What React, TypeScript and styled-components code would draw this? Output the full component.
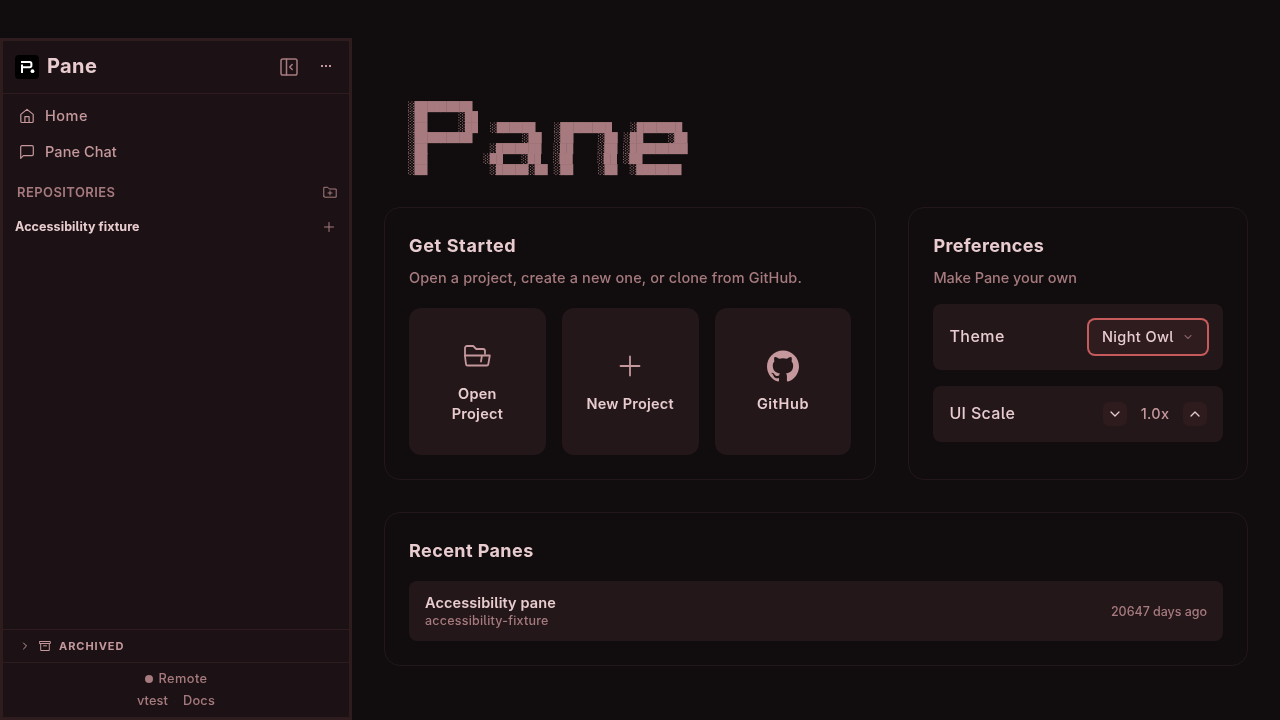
import React from "react";
import styled, { createGlobalStyle } from "styled-components";

const c = {
  bg: "#110d0e",
  side: "#1c1215",
  border: "#2f1c1f",
  faint: "#231719",
  tile: "#231719",
  raised: "#2f1c1f",
  text: "#e8cccf",
  second: "#c4989c",
  muted: "#a67a7e",
  accent: "#c75b5b",
};

const Global = createGlobalStyle`
  * { box-sizing: border-box; }
  body { margin: 0; background: ${c.bg}; overflow: hidden; }
  button { font: inherit; color: inherit; border: 0; padding: 0; background: none; }
  svg { display: block; flex: none; }
`;

const Shell = styled.div`
  height: 720px;
  display: flex;
  will-change: transform;
  color: ${c.text};
  font-family: Inter, "Liberation Sans", sans-serif;
  font-weight: 450;
  font-feature-settings: "cv05";
`;

const Label = styled.span<{ $ls?: number }>`
  white-space: nowrap;
  letter-spacing: ${(p) => p.$ls ?? 0}px;
`;

const Sidebar = styled.aside`
  width: 352px;
  margin-top: 38px;
  flex: none;
  display: flex;
  flex-direction: column;
  background: ${c.side};
  border: 3px solid ${c.border};
`;

const SideHeader = styled.header`
  height: 53px;
  display: flex;
  align-items: center;
  padding: 0 17px 0 12px;
  border-bottom: 1px solid ${c.border};
`;

const Brand = styled.h1`
  margin: 0 auto 0 8px;
  font-size: 20px;
  line-height: 28px;
  font-weight: 750;
  padding-bottom: 2px;
`;

const IconButton = styled.button<{ $color?: string; $gap?: number }>`
  display: flex;
  margin-left: ${(p) => p.$gap ?? 0}px;
  color: ${(p) => p.$color ?? c.muted};
`;

const Nav = styled.nav`
  display: flex;
  flex-direction: column;
  padding: 4px 16px 0;
`;

const NavItem = styled.a`
  height: 36px;
  display: flex;
  align-items: center;
  gap: 10px;
  font-size: 14.5px;
  line-height: 20px;
  color: ${c.second};
`;

const SectionHead = styled.div`
  display: flex;
  align-items: center;
  justify-content: space-between;
  height: 36px;
  margin-top: 4px;
  padding: 0 12px 0 14px;
  font-size: 13px;
  font-weight: 600;
  color: ${c.muted};
`;

const Repo = styled.div`
  display: flex;
  align-items: center;
  justify-content: space-between;
  height: 34px;
  padding: 0 14px 0 12px;
  font-size: 12.5px;
  font-weight: 650;

  span { padding-bottom: 1px; }
`;

const Archived = styled.div`
  height: 34px;
  margin-top: auto;
  display: flex;
  align-items: center;
  padding-left: 16px;
  border: solid ${c.border};
  border-width: 1px 0;
  color: ${c.second};
  font-size: 11px;
  font-weight: 700;
`;

const ArchiveIcon = styled.span`
  margin: 0 8px 0 8px;
`;

const Footer = styled.footer`
  height: 54px;
  display: flex;
  flex-direction: column;
  align-items: center;
  padding-top: 5px;
  font-size: 12.8px;
  line-height: 22px;
  color: ${c.muted};
`;

const FooterRow = styled.div<{ $gap: number }>`
  display: flex;
  align-items: center;
  gap: ${(p) => p.$gap}px;
`;

const Dot = styled.i<{ $size: number; $dim?: boolean }>`
  width: ${(p) => p.$size}px;
  height: ${(p) => p.$size}px;
  border-radius: 50%;
  background: ${(p) => (p.$dim ? c.border : c.muted)};
`;

const Main = styled.main`
  flex: 1;
  padding: 102px 32px 0;
`;

const Banner = styled.pre`
  margin: 0 0 0 24px;
  height: 105px;
  font-family: "DejaVu Sans Mono", monospace;
  font-size: 11px;
  line-height: 12.4px;
  font-weight: 400;
  letter-spacing: -0.2px;
  word-spacing: -0.18px;
  transform: scaleY(0.85);
  transform-origin: 0 0;
  color: ${c.muted};
`;

const Columns = styled.div`
  display: grid;
  grid-template-columns: 492.4px 339.6px;
  gap: 32px;
  margin-bottom: 32px;
`;

const Card = styled.section<{ $h: number }>`
  height: ${(p) => p.$h}px;
  padding: 24px;
  border: 1px solid ${c.faint};
  border-radius: 16px;
`;

const Title = styled.h2`
  margin: 0;
  font-size: 18px;
  line-height: 28px;
  font-weight: 700;
`;

const Sub = styled.p<{ $gap: number }>`
  margin: 8px 0 ${(p) => p.$gap}px;
  font-size: 14.5px;
  line-height: 20px;
  color: ${c.muted};
`;

const Tiles = styled.div`
  display: grid;
  grid-template-columns: repeat(3, 1fr);
  gap: 16px;
`;

const Tile = styled.button`
  height: 147px;
  display: flex;
  flex-direction: column;
  align-items: center;
  justify-content: center;
  gap: 12px;
  border-radius: 12px;
  background: ${c.tile};
  font-size: 14.5px;
  line-height: 20px;
  font-weight: 600;
  text-align: center;

  svg { color: ${c.second}; }
`;

const Setting = styled.div<{ $h: number }>`
  height: ${(p) => p.$h}px;
  margin-bottom: 16px;
  padding: 0 16px;
  display: flex;
  align-items: center;
  justify-content: space-between;
  border-radius: 8px;
  background: ${c.tile};
  font-size: 16px;

  > span { padding-bottom: 2px; }
`;

const Select = styled.button`
  width: 118px;
  height: 34px;
  padding: 0 13px;
  display: flex;
  align-items: center;
  justify-content: space-between;
  border-radius: 6px;
  background: ${c.raised};
  box-shadow: 0 0 0 2px ${c.accent};
  font-size: 14.5px;
  line-height: 20px;
  font-weight: 500;

  span { padding-bottom: 1px; }
  svg { color: ${c.muted}; opacity: 0.7; }
`;

const Stepper = styled.div`
  width: 104px;
  display: flex;
  align-items: center;
  justify-content: space-between;
  font-size: 14.5px;
  line-height: 20px;
  color: ${c.second};
`;

const Step = styled.button`
  width: 24px;
  height: 24px;
  display: grid;
  place-items: center;
  border-radius: 6px;
  background: #2d1b1e;
  color: ${c.text};
`;

const Recent = styled.div`
  height: 60px;
  margin-top: 16px;
  padding: 0 16px;
  display: flex;
  align-items: center;
  justify-content: space-between;
  border-radius: 8px;
  background: ${c.tile};
  font-size: 12.5px;
  color: ${c.muted};
`;

const RecentText = styled.div`
  display: flex;
  flex-direction: column;
  line-height: 16px;
`;

const RecentName = styled.strong`
  font-size: 14.5px;
  line-height: 20px;
  font-weight: 600;
  color: ${c.text};
`;

type IconProps = { w: number; h?: number; vb: string; sw?: number; children: React.ReactNode };
const Icon = ({ w, h = w, vb, sw = 1.2, children }: IconProps) => (
  <svg width={w} height={h} viewBox={vb} fill="none" stroke="currentColor" strokeWidth={sw} strokeLinecap="round" strokeLinejoin="round">
    {children}
  </svg>
);

const banner = [
  "░█████████",
  "░██     ░██",
  "░██     ░██  ░██████   ░████████   ░███████",
  "░█████████        ░██  ░██    ░██ ░██    ░██",
  "░██          ░███████  ░██    ░██ ░█████████",
  "░██         ░██   ░██  ░██    ░██ ░██",
  "░██          ░█████░██ ░██    ░██  ░███████",
].join("\n");

export default function App() {
  return (
    <Shell>
      <Global />
      <Sidebar>
        <SideHeader>
          <svg width="24" height="24" viewBox="0 0 24 24">
            <rect width="24" height="24" rx="4" fill="#000" />
            <path d="M7 18V9.500M6 7H14.700Q16.400 7 16.400 8.800V10.500Q16.400 12.300 14.700 12.300H7" fill="none" stroke="#fff" strokeWidth="2" />
            <circle cx="17.500" cy="16.200" r="1.900" fill="#fff" />
          </svg>
          <Brand><Label $ls={0.4}>Pane</Label></Brand>
          <IconButton>
            <Icon w={18} vb="0 0 18 18" sw={1.5}>
              <rect x="1" y="1" width="16" height="16" rx="1.8" />
              <path d="M6.5 1v16M12.2 6.5 9.7 9l2.5 2.5" />
            </Icon>
          </IconButton>
          <IconButton $color={c.second} $gap={21}>
            <svg width="13" height="14" viewBox="0 0 13 14" fill="currentColor">
              <path d="M2 5h2v2H2zM6 5h2v2H6zM10 5h2v2h-2z" />
            </svg>
          </IconButton>
        </SideHeader>
        <Nav>
          <NavItem>
            <Icon w={16} vb="0 0 16 16" sw={1.2}>
              <path d="M1.8 6.4 8 1.4l6.2 5v6.8a1.3 1.3 0 0 1-1.3 1.3H3.100a1.3 1.3 0 0 1-1.300-1.300zM5.900 14.400V8.600h4.200v5.800" />
            </Icon>
            <Label $ls={0.5}>Home</Label>
          </NavItem>
          <NavItem>
            <Icon w={16} vb="0 0 16 16" sw={1.2}>
              <path d="M1.700 14.300V3a1.300 1.300 0 0 1 1.300-1.300h10a1.300 1.300 0 0 1 1.300 1.300v7.300a1.300 1.300 0 0 1-1.300 1.300H4.400z" />
            </Icon>
            <Label $ls={0.08}>Pane Chat</Label>
          </NavItem>
        </Nav>
        <SectionHead>
          <Label $ls={0.42}>REPOSITORIES</Label>
          <Icon w={14} vb="0 0 14 14" sw={1}>
            <path d="M.8 11.200V2.300h4l1.500 1.700h6.900v8.200H1.800a1 1 0 0 1-1-1zM7 6v4M5 8h4" />
          </Icon>
        </SectionHead>
        <Repo>
          <Label $ls={0.08}>Accessibility fixture</Label>
          <IconButton><Icon w={12} vb="0 0 12 12" sw={1}><path d="M6 1.500v9M1.500 6h9" /></Icon></IconButton>
        </Repo>
        <Archived>
          <Icon w={12} vb="0 0 12 12" sw={1}><path d="m4.500 3 3 3-3 3" /></Icon>
          <ArchiveIcon>
            <Icon w={12} vb="0 0 12 12" sw={1}><path d="M.7 1.500h10.600v2H.7zM1.700 3.500v7h8.600v-7M4.500 5.800h3" /></Icon>
          </ArchiveIcon>
          <Label $ls={0.95}>ARCHIVED</Label>
        </Archived>
        <Footer>
          <FooterRow $gap={6}><Dot $size={8} /><Label $ls={0.4}>Remote</Label></FooterRow>
          <FooterRow $gap={7}><Label $ls={0.1}>vtest</Label><Dot $size={1} $dim /><Label $ls={0.2}>Docs</Label></FooterRow>
        </Footer>
      </Sidebar>
      <Main>
        <Banner>{banner}</Banner>
        <Columns>
          <Card $h={273}>
            <Title><Label $ls={0.65}>Get Started</Label></Title>
            <Sub $gap={20}><Label $ls={0.13}>Open a project, create a new one, or clone from GitHub.</Label></Sub>
            <Tiles>
              <Tile>
                <Icon w={32} vb="0 0 32 32" sw={1.800}>
                  <path d="M4 15V8a2 2 0 0 1 2-2h6.200l3 3h6.800a2 2 0 0 1 2 2V13.500M3.800 15.500h25l-1.500 8.600a1.600 1.600 0 0 1-1.600 1.400H6.600a1.600 1.600 0 0 1-1.600-1.400L3.900 15.500M20.800 16.500l-.8 5" />
                </Icon>
                <Label $ls={0.25}>Open<br />Project</Label>
              </Tile>
              <Tile>
                <Icon w={32} vb="0 0 32 32" sw={1.800}><path d="M16 6.500v19M6.500 16h19" /></Icon>
                <Label $ls={0.25}>New Project</Label>
              </Tile>
              <Tile>
                <svg width="32" height="32" viewBox="0 0 24 24" fill="currentColor">
                  <path d="M12 .297c-6.630 0-12 5.373-12 12 0 5.303 3.438 9.800 8.205 11.385.6.113.820-.258.820-.577 0-.285-.010-1.040-.015-2.040-3.338.724-4.042-1.610-4.042-1.610C4.422 18.070 3.633 17.700 3.633 17.700c-1.087-.744.084-.729.084-.729 1.205.084 1.838 1.236 1.838 1.236 1.070 1.835 2.809 1.305 3.495.998.108-.776.417-1.305.760-1.605-2.665-.300-5.466-1.332-5.466-5.930 0-1.310.465-2.380 1.235-3.220-.135-.303-.540-1.523.105-3.176 0 0 1.005-.322 3.300 1.230.960-.267 1.980-.399 3-.405 1.020.006 2.040.138 3 .405 2.280-1.552 3.285-1.230 3.285-1.230.645 1.653.240 2.873.120 3.176.765.840 1.230 1.910 1.230 3.220 0 4.610-2.805 5.625-5.475 5.920.420.360.810 1.096.810 2.220 0 1.606-.015 2.896-.015 3.286 0 .315.210.690.825.570C20.565 22.092 24 17.592 24 12.297c0-6.627-5.373-12-12-12" />
                </svg>
                <Label $ls={0.6}>GitHub</Label>
              </Tile>
            </Tiles>
          </Card>
          <Card $h={273}>
            <Title><Label $ls={0.35}>Preferences</Label></Title>
            <Sub $gap={16}><Label $ls={-0.06}>Make Pane your own</Label></Sub>
            <Setting $h={66}>
              <Label $ls={0.5}>Theme</Label>
              <Select>
                <Label $ls={0.38}>Night Owl</Label>
                <Icon w={12} vb="0 0 12 12" sw={1.1}><path d="m3 4.500 3 3 3-3" /></Icon>
              </Select>
            </Setting>
            <Setting $h={56}>
              <Label $ls={0.35}>UI Scale</Label>
              <Stepper>
                <Step><Icon w={14} vb="0 0 14 14" sw={1.300}><path d="m3 5 4 4 4-4" /></Icon></Step>
                <Label $ls={0.25}>1.0x</Label>
                <Step><Icon w={14} vb="0 0 14 14" sw={1.300}><path d="m3 9 4-4 4 4" /></Icon></Step>
              </Stepper>
            </Setting>
          </Card>
        </Columns>
        <Card $h={154}>
          <Title><Label $ls={0.42}>Recent Panes</Label></Title>
          <Recent>
            <RecentText>
              <RecentName><Label $ls={0.1}>Accessibility pane</Label></RecentName>
              <Label $ls={0.22}>accessibility-fixture</Label>
            </RecentText>
            <Label $ls={-0.04}>20647 days ago</Label>
          </Recent>
        </Card>
      </Main>
    </Shell>
  );
}
